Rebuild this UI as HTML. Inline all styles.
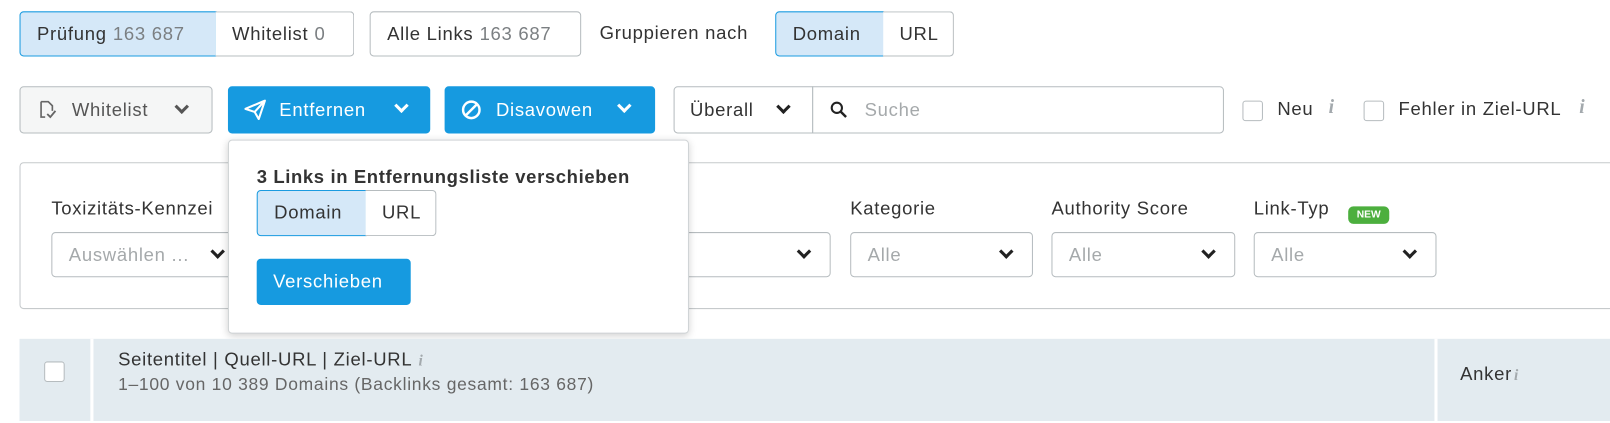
<!DOCTYPE html>
<html><head><meta charset="utf-8"><style>
*{box-sizing:border-box;margin:0;padding:0}
body{width:1610px;height:412px;overflow:hidden;background:#fff;font-family:"Liberation Sans",sans-serif;font-size:18px;letter-spacing:0.7px;color:#333;position:relative}
#w{position:absolute;left:0;top:0;width:1568px;height:402px;transform:scale(1.0268);transform-origin:0 0}
.a{position:absolute}
.btn{position:absolute;display:flex;align-items:center;border:1.5px solid #b6bcbf;border-radius:4px;background:#fff;padding-left:16px;white-space:nowrap}
.sel{background:#d5e8f8;border-color:#1a9be0}
.num{color:#7b7f82;margin-left:6px}
.blue{background:#169ae0;border:none;color:#fff}
.chev{width:10px;height:10px;border-right:3px solid currentColor;border-bottom:3px solid currentColor;transform:rotate(45deg);position:absolute}
.lbl{position:absolute;font-size:18px;color:#333;white-space:nowrap}
.dd{position:absolute;height:44px;border:1.5px solid #b6bcbf;border-radius:4px;background:#fff;color:#a5a9ab;padding:11px 16px}
.dd .chev{right:20px;top:13px;color:#222}
.cb{position:absolute;width:20px;height:20px;border:1.5px solid #b6bcbf;border-radius:3px;background:#fff}
.i{position:absolute;color:#a3a9ad;font-family:"Liberation Serif",serif;font-style:italic;font-weight:bold;font-size:19px}
.ii{color:#a3a9ad;font-family:"Liberation Serif",serif;font-style:italic;font-weight:bold;font-size:15px;margin-left:6px}
</style></head><body><div id="w">

<div class="btn sel" style="left:19px;top:11px;width:192px;height:44px;border-radius:4px 0 0 4px">Prüfung<span class="num">163 687</span></div>
<div class="btn" style="left:210px;top:11px;width:135px;height:44px;border-radius:0 4px 4px 0;border-left:none">Whitelist<span class="num">0</span></div>
<div class="btn" style="left:360px;top:11px;width:206px;height:44px">Alle Links<span class="num">163 687</span></div>
<div class="lbl" style="left:584px;top:22px">Gruppieren nach</div>
<div class="btn sel" style="left:755px;top:11px;width:106px;height:44px;border-radius:4px 0 0 4px">Domain</div>
<div class="btn" style="left:860px;top:11px;width:69px;height:44px;border-radius:0 4px 4px 0;border-left:none">URL</div>

<div class="btn" style="left:19px;top:84px;width:188px;height:46px;background:#f5f6f6;color:#555">
<svg width="20" height="20" viewBox="0 0 20 20" style="margin-right:14px"><path d="M4 2h7l4 4v5M4 2v15h4" fill="none" stroke="#666" stroke-width="1.6"/><path d="M10 14l3 3 5-6" fill="none" stroke="#666" stroke-width="1.8"/></svg>Whitelist<span class="chev" style="left:152px;top:14px;color:#555"></span></div>
<div class="btn blue" style="left:222px;top:84px;width:197px;height:46px;padding-left:16px">
<svg width="22" height="20" viewBox="0 0 22 20" style="margin-right:12px"><path d="M1 9L20 1 14 19 10 12z M10 12L20 1" fill="none" stroke="#fff" stroke-width="2" stroke-linejoin="round"/></svg>Entfernen<span class="chev" style="left:164px;top:14px"></span></div>
<div class="btn blue" style="left:433px;top:84px;width:205px;height:46px;padding-left:16px">
<svg width="20" height="20" viewBox="0 0 20 20" style="margin-right:14px"><circle cx="10" cy="10" r="8" fill="none" stroke="#fff" stroke-width="2.4"/><path d="M5 15L15 5" stroke="#fff" stroke-width="2.4"/></svg>Disavowen<span class="chev" style="left:170px;top:14px"></span></div>
<div class="btn" style="left:656px;top:84px;width:136px;height:46px;border-radius:4px 0 0 4px;padding-left:15px">Überall<span class="chev" style="left:101px;top:14px;color:#222"></span></div>
<div class="btn" style="left:791px;top:84px;width:401px;height:46px;border-radius:0 4px 4px 0;color:#a5a9ab">
<svg width="18" height="18" viewBox="0 0 18 18" style="margin-right:16px"><circle cx="7" cy="7" r="5" fill="none" stroke="#222" stroke-width="2"/><path d="M11 11l5 5" stroke="#222" stroke-width="2.4"/></svg>Suche</div>
<div class="cb" style="left:1210px;top:98px"></div>
<div class="lbl" style="left:1244px;top:96px">Neu</div>
<div class="i" style="left:1294px;top:94px">i</div>
<div class="cb" style="left:1328px;top:98px"></div>
<div class="lbl" style="left:1362px;top:96px">Fehler in Ziel-URL</div>
<div class="i" style="left:1538px;top:94px">i</div>

<div class="a" style="left:19px;top:158px;width:1600px;height:143px;border:1.5px solid #c6cacc;border-radius:4px"></div>
<div class="lbl" style="left:50px;top:193px">Toxizitäts-Kennzei</div>
<div class="dd" style="left:50px;top:226px;width:200px">Auswählen ...<span class="chev" style="right:auto;left:156px"></span></div>
<div class="dd" style="left:600px;top:226px;width:209px"><span class="chev"></span></div>
<div class="lbl" style="left:828px;top:193px">Kategorie</div>
<div class="dd" style="left:828px;top:226px;width:178px">Alle<span class="chev"></span></div>
<div class="lbl" style="left:1024px;top:193px">Authority Score</div>
<div class="dd" style="left:1024px;top:226px;width:179px">Alle<span class="chev"></span></div>
<div class="lbl" style="left:1221px;top:193px">Link-Typ</div>
<div class="a" style="left:1313px;top:201px;width:40px;height:17px;background:#4caf3e;border-radius:5px;color:#fff;font-size:10px;font-weight:bold;text-align:center;line-height:17px;letter-spacing:0">NEW</div>
<div class="dd" style="left:1221px;top:226px;width:178px">Alle<span class="chev"></span></div>

<div class="a" style="left:222px;top:136px;width:449px;height:189px;background:#fff;border:1px solid #d0d4d6;border-radius:4px;box-shadow:0 2px 8px rgba(0,0,0,.18)"></div>
<div class="lbl" style="left:250px;top:162px;font-weight:bold;color:#333;letter-spacing:0.6px">3 Links in Entfernungsliste verschieben</div>
<div class="btn sel" style="left:250px;top:185px;width:107px;height:45px;border-radius:4px 0 0 4px">Domain</div>
<div class="btn" style="left:356px;top:185px;width:69px;height:45px;border-radius:0 4px 4px 0;border-left:none">URL</div>
<div class="btn blue" style="left:250px;top:252px;width:150px;height:45px">Verschieben</div>

<div class="a" style="left:19px;top:330px;width:1600px;height:80px;background:#e3ebf0"></div>
<div class="a" style="left:88px;top:330px;width:3px;height:82px;background:#fff"></div>
<div class="a" style="left:1397px;top:330px;width:3px;height:82px;background:#fff"></div>
<div class="cb" style="left:43px;top:352px;background:#fff"></div>
<div class="lbl" style="left:115px;top:340px">Seitentitel | Quell-URL | Ziel-URL<span class="ii">i</span></div>
<div class="lbl" style="left:115px;top:365px;color:#666;font-size:17px">1–100 von 10 389 Domains (Backlinks gesamt: 163 687)</div>
<div class="lbl" style="left:1422px;top:354px">Anker<span class="ii" style="margin-left:2px">i</span></div>
</div></body></html>
